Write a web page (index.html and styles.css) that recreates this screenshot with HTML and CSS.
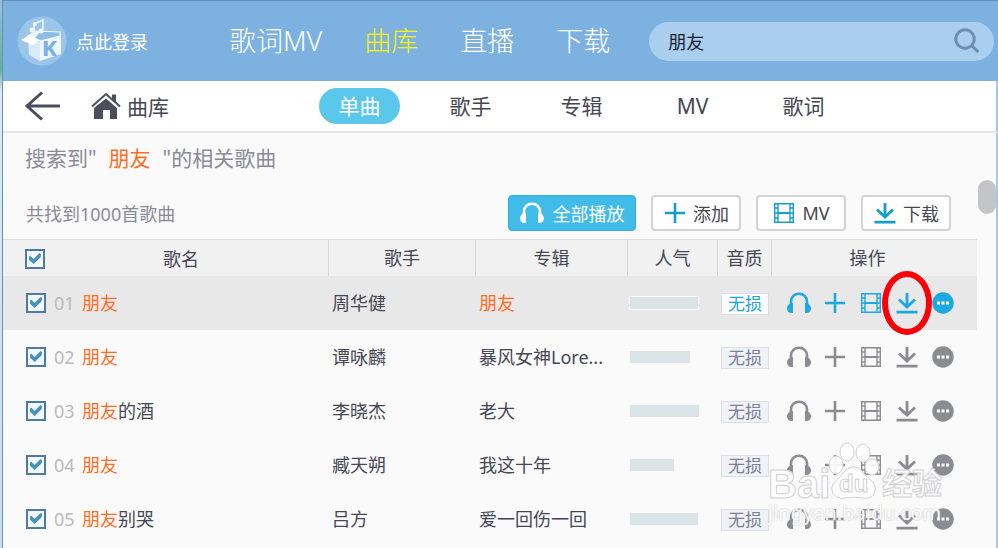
FILE: index.html
```html
<!DOCTYPE html>
<html lang="zh-CN">
<head>
    <meta charset="UTF-8">
    <title>曲库</title>
    <link rel="stylesheet" href="styles.css">
</head>
<body>
    <svg class="sprite" aria-hidden="true">
        <symbol id="icon-headphones" viewBox="0 0 24 22">
            <path d="M4 16V9.500C4 4.800 7.500 1.700 12 1.700S20 4.800 20 9.500V16" fill="none" stroke="currentColor" stroke-width="2.600"/>
            <path d="M6 11v10H4.500C2 21 0 19 0 16.500c0-2 1-3.500 2.600-4.500zM18 11v10h1.500c2.500 0 4.500-2 4.500-4.500 0-2-1-3.500-2.600-4.500z" fill="currentColor"/>
        </symbol>
        <symbol id="icon-plus" viewBox="0 0 24 22">
            <path d="M12 1v20M2 11h20" fill="none" stroke="currentColor" stroke-width="2.600"/>
        </symbol>
        <symbol id="icon-film" viewBox="0 0 24 22">
            <path d="M2.700 1.700h18.600v18.600H2.700zM6 1.700v18.600M18 1.700v18.600M2.700 6h3.300M2.700 11h3.300M2.700 16h3.300M18 6h3.300M18 11h3.300M18 16h3.300" fill="none" stroke="currentColor" stroke-width="1.400"/>
            <path d="M6 11h12" fill="none" stroke="currentColor" stroke-width="2"/>
        </symbol>
        <symbol id="icon-download" viewBox="0 0 24 22">
            <path d="M12 1v14M4 7.500l8 7.500 8-7.500M1.500 20.200h21" fill="none" stroke="currentColor" stroke-width="2.800"/>
        </symbol>
        <symbol id="icon-more" viewBox="0 0 24 22">
            <circle cx="12" cy="11" r="10.700" fill="currentColor"/>
            <path d="M6 9.500h3v3H6zM10.500 9.500h3v3h-3zM15 9.500h3v3h-3z" fill="#fff"/>
        </symbol>
    </svg>

    <div class="app">
        <header class="topbar">
            <a class="login" href="#">
                <svg class="logo" viewBox="0 0 50 50" aria-hidden="true">
                    <circle cx="25" cy="25" r="24.500" fill="#9cc5ea"/>
                    <path d="M11 23l12 3v19l-11-6z" fill="#d9eafa"/>
                    <path d="M23 24l21-4v18l-21 7z" fill="#eef6fd"/>
                    <path d="M11 20l8-5 24 1v4l-20 5z" fill="#8dbce5" stroke="#eef6fd" stroke-width="1.200"/>
                    <path d="M11 20l8-5 4 1-5 6z" fill="#eef6fd"/>
                    <path d="M23 24l-7 5L4 24l8-5z" fill="#fff"/>
                    <path d="M17 15V8l9-4v10" fill="none" stroke="#eef6fd" stroke-width="1.500"/>
                    <circle cx="15" cy="14" r="2.500" fill="#eef6fd"/>
                    <circle cx="24" cy="15" r="2.500" fill="#eef6fd"/>
                    <circle cx="18" cy="8" r="2" fill="#eef6fd"/>
                    <text class="logo-letter" x="25" y="40">K</text>
                </svg>
                <span>点此登录</span>
            </a>
            <nav class="main-nav">
                <a href="#">歌词MV</a>
                <a class="active" href="#">曲库</a>
                <a href="#">直播</a>
                <a href="#">下载</a>
            </nav>
            <form class="search">
                <input type="text" value="朋友" aria-label="搜索">
                <button type="button" aria-label="搜索">
                    <svg viewBox="0 0 26 26"><circle cx="11" cy="11" r="9.200"/><path d="M17.500 17.500l7 6.500"/></svg>
                </button>
            </form>
        </header>

        <div class="subbar">
            <button class="back" type="button" aria-label="返回">
                <svg viewBox="0 0 36 30"><path d="M35 15H2M17 1.500L2 15l15 13.500"/></svg>
            </button>
            <a class="home" href="#">
                <svg viewBox="0 0 30 28" aria-hidden="true">
                    <path d="M21 2.500h4v8l-4-4z"/>
                    <path d="M1 14.500L15 2l14 12.500" class="roof"/>
                    <path d="M15 6.500L26 16v11h-7v-9h-7v9H3V16z"/>
                </svg>
                <span>曲库</span>
            </a>
            <nav class="tabs">
                <a class="active" href="#">单曲</a>
                <a href="#">歌手</a>
                <a href="#">专辑</a>
                <a href="#">MV</a>
                <a href="#">歌词</a>
            </nav>
        </div>

        <main class="content">
            <p class="query">搜索到"<em>朋友</em>"的相关歌曲</p>
            <div class="toolbar">
                <span class="count">共找到1000首歌曲</span>
                <button class="btn primary" type="button"><svg class="icon"><use href="#icon-headphones"/></svg>全部播放</button>
                <button class="btn" type="button"><svg class="icon"><use href="#icon-plus"/></svg>添加</button>
                <button class="btn" type="button"><svg class="icon"><use href="#icon-film"/></svg>MV</button>
                <button class="btn" type="button"><svg class="icon"><use href="#icon-download"/></svg>下载</button>
            </div>

            <table class="songs">
                <colgroup>
                    <col>
                    <col class="col-artist">
                    <col class="col-album">
                    <col class="col-heat">
                    <col class="col-quality">
                    <col class="col-actions">
                </colgroup>
                <thead>
                    <tr>
                        <th class="name-head"><input type="checkbox" checked aria-label="全选"><span>歌名</span></th>
                        <th>歌手</th>
                        <th>专辑</th>
                        <th>人气</th>
                        <th>音质</th>
                        <th class="last">操作</th>
                    </tr>
                </thead>
                <tbody id="song-list"></tbody>
            </table>
            <div class="scroll-thumb"></div>
        </main>

        <div class="watermark">
            <div class="mark">
                <span class="bai">Bai</span>
                <span class="paw">
                    <svg viewBox="0 0 54 58" aria-hidden="true">
                        <ellipse cx="8" cy="23" rx="7" ry="9"/>
                        <ellipse cx="19" cy="10" rx="7" ry="9"/>
                        <ellipse cx="35" cy="11" rx="7" ry="9"/>
                        <ellipse cx="44" cy="25" rx="7" ry="8"/>
                        <path d="M26 25c7 0 9 6 13 10 5 4 9 7 8 13-1 7-6 9-12 8-6-1-12-1-18 0-7 1-12-2-13-8-1-6 4-9 8-13 4-5 7-10 14-10z"/>
                    </svg>
                    <span class="du">du</span>
                </span>
                <span class="jingyan">经验</span>
            </div>
            <div class="site">jingyan.baidu.com</div>
        </div>
    </div>

    <script>
        const songs = [
            { match: "朋友", rest: "", artist: "周华健", album: "<em>朋友</em>", heat: 68 },
            { match: "朋友", rest: "", artist: "谭咏麟", album: "暴风女神Lore...", heat: 60 },
            { match: "朋友", rest: "的酒", artist: "李晓杰", album: "老大", heat: 69 },
            { match: "朋友", rest: "", artist: "臧天朔", album: "我这十年", heat: 44 },
            { match: "朋友", rest: "别哭", artist: "吕方", album: "爱一回伤一回", heat: 68 }
        ];

        const actions = [
            ["headphones", "播放"],
            ["plus", "添加"],
            ["film", "MV"],
            ["download", "下载"],
            ["more", "更多"]
        ];

        const actionButtons = actions.map(([icon, label]) =>
            `<button class="act ${icon}" type="button" aria-label="${label}"><svg class="icon"><use href="#icon-${icon}"/></svg></button>`
        ).join("");

        document.getElementById("song-list").innerHTML = songs.map((song, i) => `
            <tr class="${i === 0 ? "selected" : ""}">
                <td>
                    <label class="name">
                        <input type="checkbox" checked>
                        <span class="num">0${i + 1}</span>
                        <span><em>${song.match}</em>${song.rest}</span>
                    </label>
                </td>
                <td>${song.artist}</td>
                <td>${song.album}</td>
                <td class="heat-cell"><div class="heat" style="width: ${song.heat}px"></div></td>
                <td class="quality-cell"><span class="quality">无损</span></td>
                <td><div class="actions">${actionButtons}</div></td>
            </tr>`).join("");
    </script>
</body>
</html>
```
FILE: styles.css
```css
*,
*::after {
    box-sizing: border-box;
}

body {
    margin: 0;
    background: linear-gradient(#9bc4d8 0, #5fb09a 70px, #dcebf2 90px, #c5dfec 100%);
    font-family: "Noto Sans", "Noto Sans CJK SC", sans-serif;
    font-size: 18px;
    color: #454754;
}

a {
    color: inherit;
    text-decoration: none;
}

em {
    color: #ff6d1f;
    font-style: normal;
}

button,
input {
    margin: 0;
    padding: 0;
    border: 0;
    background: none;
    font: inherit;
    color: inherit;
}

.sprite {
    position: absolute;
    width: 0;
    height: 0;
}

.icon {
    display: block;
    flex: none;
    width: 24px;
    height: 22px;
}

.app {
    position: relative;
    min-height: 100vh;
    margin-left: 2px;
    border-left: 1px solid #6790b5;
    background-color: #fafafa;
}

/* top bar */
.topbar {
    display: flex;
    align-items: center;
    height: 81px;
    padding: 0 4px 0 14px;
    border-top: 1px solid #628fbd;
    background-color: #7cb1e0;
    color: #fff;
}

.login {
    display: flex;
    align-items: center;
    gap: 9px;
    width: 212px;
}

.logo {
    width: 50px;
    height: 50px;
}

.logo-letter {
    font-size: 22px;
    font-weight: 800;
    fill: #7cb1e0;
}

.main-nav {
    display: flex;
    gap: 42px;
    font-size: 27px;
    font-weight: 300;
    line-height: 40px;
}

.main-nav .active {
    color: #f7f30a;
}

.search {
    display: flex;
    flex: 1;
    align-items: center;
    height: 39px;
    margin-left: 39px;
    padding: 0 14px 0 19px;
    border-radius: 20px;
    background-color: #a9ceee;
}

.search input {
    flex: 1;
    min-width: 0;
    color: #1c222b;
    outline: 0;
}

.search svg {
    display: block;
    width: 26px;
    height: 26px;
    fill: none;
    stroke: #6f8fb0;
    stroke-width: 3;
}

/* second bar */
.subbar {
    display: flex;
    align-items: center;
    height: 52px;
    padding-left: 22px;
    border-right: 2px solid #a3c9ea;
    border-bottom: 2px solid #e6e6e6;
    background-color: #fff;
    font-size: 21px;
}

.back svg {
    display: block;
    width: 36px;
    height: 30px;
    fill: none;
    stroke: #4b4e5c;
    stroke-width: 3;
}

.home {
    display: flex;
    align-items: center;
    gap: 6px;
    width: 258px;
    padding-left: 30px;
}

.home svg {
    width: 30px;
    height: 28px;
    fill: #4b4e5c;
}

.home .roof {
    fill: none;
    stroke: #4b4e5c;
    stroke-width: 2;
}

.tabs {
    display: flex;
    gap: 30px;
}

.tabs a {
    width: 81px;
    border-radius: 18px;
    line-height: 36px;
    text-align: center;
}

.tabs .active {
    background-color: #5bc8eb;
    color: #fff;
}

/* search result */
.content {
    position: relative;
    min-height: calc(100vh - 133px);
    padding-right: 19px;
    border-right: 2px solid #a3c9ea;
}

.query {
    margin: 0;
    padding: 10px 22px;
    color: #8a8b97;
    font-size: 21px;
    line-height: 30px;
}

.query em {
    margin: 0 12px;
}

.toolbar {
    display: flex;
    align-items: center;
    gap: 15px;
    padding: 12px 26px 8px 23px;
}

.count {
    flex: 1;
    color: #8a8b97;
}

.btn {
    display: flex;
    align-items: center;
    justify-content: center;
    gap: 6px;
    width: 90px;
    height: 36px;
    border: 2px solid #d4d4d6;
    border-radius: 4px;
    background-color: #fff;
}

.btn .icon {
    color: #159dcb;
}

.btn.primary {
    gap: 9px;
    width: 128px;
    border: 1px solid #35aedb;
    background-color: #41bce8;
    color: #fff;
}

.btn.primary .icon {
    color: #fff;
}

/* song table */
.songs {
    width: 100%;
    table-layout: fixed;
    border-collapse: separate;
    border-spacing: 0;
}

.col-artist {
    width: 147px;
}

.col-album {
    width: 152px;
}

.col-heat {
    width: 90px;
}

.col-quality {
    width: 54px;
}

.col-actions {
    width: 205px;
}

th {
    height: 37px;
    padding: 0;
    border-top: 1px solid #dedede;
    border-right: 1px solid #d6d6d6;
    background-color: #f1f1f1;
    font-weight: normal;
    line-height: 24px;
}

th.last {
    padding-right: 14px;
    border-right: 0;
}

.name-head {
    text-align: left;
}

.name-head input {
    margin: 0 118px 0 22px;
    vertical-align: middle;
}

.name-head span {
    vertical-align: middle;
}

td {
    height: 54px;
    padding: 0 3px;
    line-height: 24px;
    white-space: nowrap;
}

.selected td {
    background-color: #e8e8e8;
}

.name {
    display: flex;
    align-items: center;
    padding-left: 20px;
}

.num {
    width: 28px;
    margin-left: 8px;
    color: #b9babd;
}

input[type="checkbox"] {
    width: 20px;
    height: 20px;
    border: 2px solid #4d7aa3;
    background-color: #f4f8fa;
    appearance: none;
}

input[type="checkbox"]:checked::after {
    content: "";
    display: block;
    width: 12px;
    height: 11px;
    margin: 2px;
    background-color: #4592bf;
    clip-path: polygon(0 32%, 12% 26%, 38% 54%, 88% 0, 100% 8%, 98% 36%, 40% 100%, 0 62%);
}

.heat-cell {
    padding: 0 2px;
}

.heat {
    height: 12px;
    background-color: #dae3e6;
}

.selected .heat {
    outline: 1px solid #fff;
}

.quality-cell {
    padding: 0;
    text-align: center;
}

.quality {
    display: inline-block;
    width: 48px;
    border: 1px solid #dcdfea;
    background-color: #f0f2f7;
    color: #7b7f97;
    font-size: 17px;
    line-height: 20px;
}

.selected .quality {
    background-color: #fff;
    color: #1ca5dd;
}

.actions {
    display: flex;
    gap: 12px;
    padding-left: 12px;
    color: #8b8b92;
}

.selected .actions {
    color: #1ba9df;
}

.act {
    position: relative;
}

/* red ring round the download button */
.selected .download {
    z-index: 1;
}

.selected .download::after {
    content: "";
    position: absolute;
    top: -21px;
    left: -13px;
    width: 50px;
    height: 64px;
    border: 6px solid #fb0007;
    border-radius: 50%;
}

.scroll-thumb {
    position: absolute;
    top: 47px;
    right: 0;
    width: 18px;
    height: 34px;
    border-radius: 9px;
    background-color: #c3c5c9;
}

/* watermark */
.watermark {
    position: absolute;
    z-index: 2;
    right: 54px;
    bottom: 22px;
    width: 176px;
    color: rgba(255, 255, 255, 0.9);
    pointer-events: none;
}

.mark {
    display: flex;
    align-items: flex-end;
    height: 58px;
    font-family: "Liberation Sans", "Noto Sans CJK SC", sans-serif;
    font-weight: bold;
    line-height: 32px;
    -webkit-text-stroke: 1px #d0d0d2;
}

.bai {
    width: 60px;
    font-size: 40px;
}

.paw {
    position: relative;
    width: 54px;
    height: 58px;
}

.paw svg {
    display: block;
    width: 54px;
    height: 58px;
    fill: rgba(255, 255, 255, 0.9);
    stroke: #d0d0d2;
}

.du {
    position: absolute;
    bottom: 0;
    left: 11px;
    font-size: 24px;
}

.jingyan {
    font-size: 30px;
}

.site {
    font-family: "Noto Sans", sans-serif;
    font-size: 20px;
    line-height: 26px;
    text-shadow: 0 0 2px #bbb;
}
```
